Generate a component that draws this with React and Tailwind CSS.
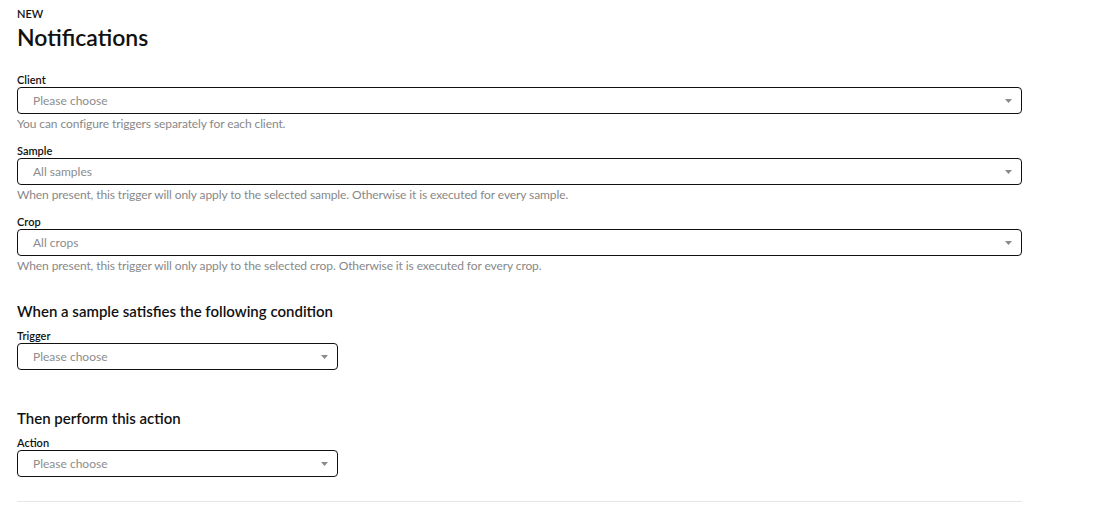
import React from "react";

function Arrow() {
  return (
    <svg width="7" height="4" viewBox="0 0 7 4" className="shrink-0">
      <path d="M0 0 L7 0 L3.5 4 Z" fill="#8a8a8a" />
    </svg>
  );
}

function Select({ value, wide = true }) {
  return (
    <div
      className={`flex h-[27px] items-center justify-between rounded-[4px] border border-[#111] bg-white pl-[15px] pr-[9px] ${
        wide ? "w-[1005px]" : "w-[321px]"
      }`}
    >
      <span className="text-[12px] leading-none text-[#8c8c8c]">{value}</span>
      <Arrow />
    </div>
  );
}

function Field({ label, value, help, wide = true }) {
  return (
    <div className="flex flex-col">
      <div className="h-[14px] text-[11px] font-semibold leading-[14px] text-[#111]">{label}</div>
      <Select value={value} wide={wide} />
      {help && (
        <div className="h-[16px] pt-[2px] text-[12px] leading-[16px] tracking-[-0.1px] text-[#888]">{help}</div>
      )}
    </div>
  );
}

export default function App() {
  return (
    <div
      className="min-h-[512px] w-full bg-white pl-[17px] text-[#111]"
      style={{ fontFamily: 'Lato, "Segoe UI", sans-serif' }}
    >
      <div className="pt-[7px] text-[11px] font-semibold leading-[14px]">NEW</div>
      <h1 className="mt-0 text-[23px] font-semibold leading-[32px]">Notifications</h1>
      <div className="mt-[20px] flex flex-col gap-[14px]">
        <Field label="Client" value="Please choose" help="You can configure triggers separately for each client." />
        <Field
          label="Sample"
          value="All samples"
          help="When present, this trigger will only apply to the selected sample. Otherwise it is executed for every sample."
        />
        <Field
          label="Crop"
          value="All crops"
          help="When present, this trigger will only apply to the selected crop. Otherwise it is executed for every crop."
        />
      </div>
      <h2 className="mt-[29px] text-[15px] font-semibold leading-[20px]">When a sample satisfies the following condition</h2>
      <div className="mt-[8px]">
        <Field label="Trigger" value="Please choose" wide={false} />
      </div>
      <h2 className="mt-[38px] text-[15px] font-semibold leading-[20px]">Then perform this action</h2>
      <div className="mt-[8px]">
        <Field label="Action" value="Please choose" wide={false} />
      </div>
      <div className="mt-[24px] h-px w-[1005px] bg-[#e6e6ec]" />
    </div>
  );
}
